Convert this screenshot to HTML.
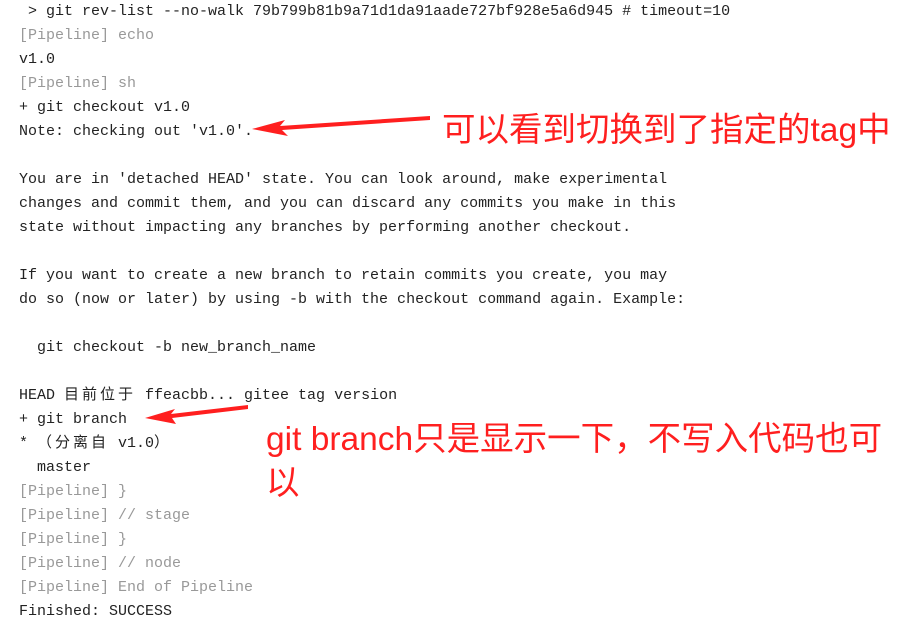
<!DOCTYPE html>
<html><head><meta charset="utf-8"><style>
html,body{margin:0;padding:0;background:#fff;width:897px;height:642px;overflow:hidden;position:relative}
.t{position:absolute;left:19px;top:0px;font-family:"Liberation Mono","Noto Sans CJK SC",monospace;font-size:15px;line-height:24px;color:#222;white-space:pre}
.g{color:#999}
.c{letter-spacing:3px}
.r{position:absolute;font-family:"Liberation Sans","Noto Sans CJK SC",sans-serif;color:#ff1f1f;font-size:33.5px;white-space:nowrap;line-height:44px}
</style></head><body>
<div class="t"> &gt; git rev-list --no-walk 79b799b81b9a71d1da91aade727bf928e5a6d945 # timeout=10
<span class="g">[Pipeline] echo</span>
v1.0
<span class="g">[Pipeline] sh</span>
+ git checkout v1.0
Note: checking out 'v1.0'.

You are in 'detached HEAD' state. You can look around, make experimental
changes and commit them, and you can discard any commits you make in this
state without impacting any branches by performing another checkout.

If you want to create a new branch to retain commits you create, you may
do so (now or later) by using -b with the checkout command again. Example:

  git checkout -b new_branch_name

HEAD <span class="c">目前位于</span> ffeacbb... gitee tag version
+ git branch
* <span class="c">（分离自</span> v1.0<span class="c">）</span>
  master
<span class="g">[Pipeline] }
[Pipeline] // stage
[Pipeline] }
[Pipeline] // node
[Pipeline] End of Pipeline</span>
Finished: SUCCESS</div>
<div class="r" style="left:442px;top:109px">可以看到切换到了指定的tag中</div>
<div class="r" style="left:266px;top:418px">git branch只是显示一下，不写入代码也可</div>
<div class="r" style="left:266px;top:462px">以</div>
<svg width="897" height="642" style="position:absolute;left:0;top:0">
<polygon fill="#ff1f1f" points="430,116 430,120 282,130 288,136 252,129 285,120 280,126"/>
<polygon fill="#ff1f1f" points="248,405 248,409 172,418 176,424 145,418 175,409 171,414"/>
</svg>
</body></html>
